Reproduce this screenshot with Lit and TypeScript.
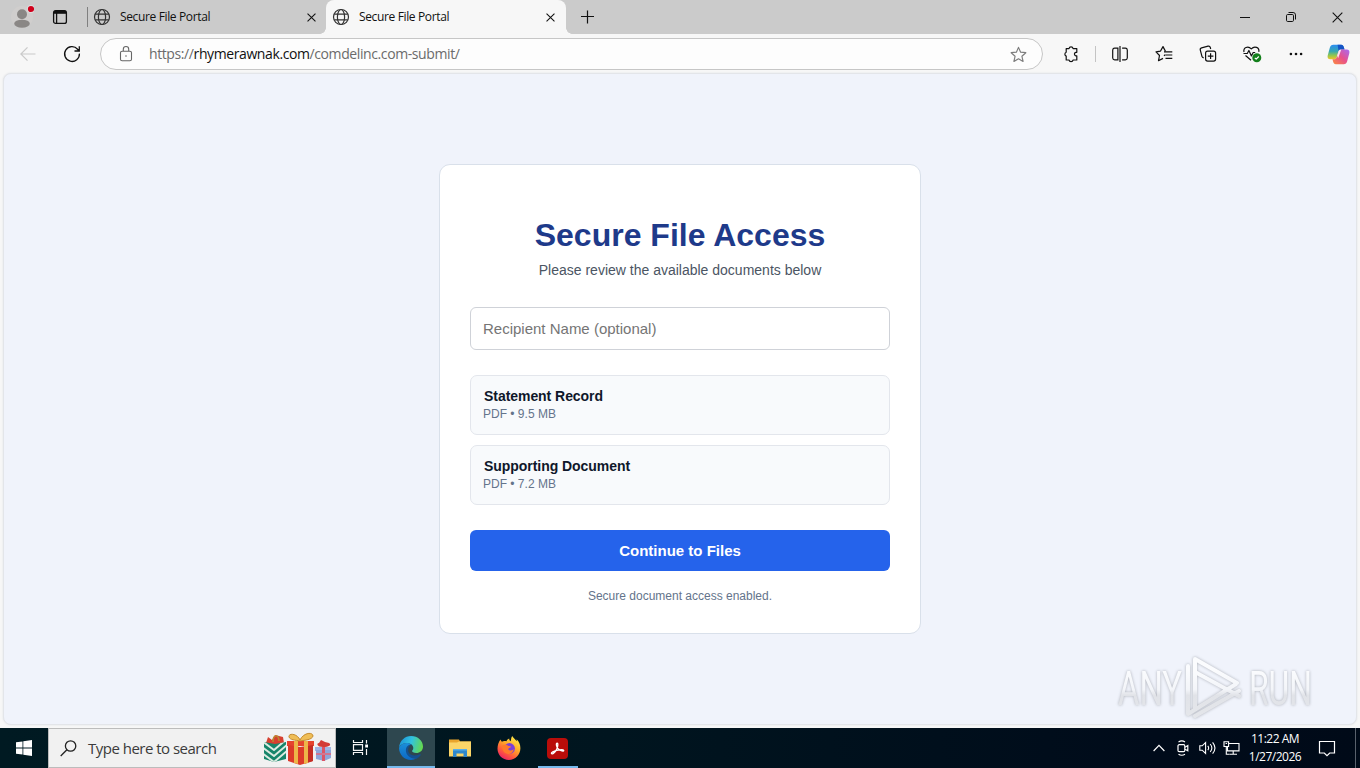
import { LitElement, html, css, svg } from "lit";
import { customElement } from "lit/decorators.js";

const globe = html`<svg class="ic" width="18" height="18" viewBox="0 0 18 18" fill="none" stroke="#333" stroke-width="1.2">
  <circle cx="9" cy="9" r="7.5"/><ellipse cx="9" cy="9" rx="3.6" ry="7.5"/><path d="M2.2 6.2h13.6M2.2 11.8h13.6"/></svg>`;

const cross = (s: number, w = 1.2) => html`<svg class="ic" width=${s} height=${s} viewBox="0 0 10 10" fill="none" stroke="#111" stroke-width=${w}>
  <path d="M.6.6l8.8 8.8M9.4.6L.6 9.4"/></svg>`;

@customElement("tab-strip")
class TabStrip extends LitElement {
  static styles = css`
    :host { display: flex; height: 34px; background: #cbcbcb; align-items: stretch; font: 12px "Open Sans", "Noto Sans", sans-serif; color: #111; }
    .ic { display: block; flex: none; }
    .slot { display: flex; align-items: center; justify-content: center; flex: none; }
    .avatar { width: 44px; }
    .work { width: 32px; }
    .sep { width: 1px; height: 20px; margin: 7px 0 0 11px; background: #808080; flex: none; }
    .tab { box-sizing: border-box; display: flex; align-items: center; padding: 0 10px 0 7px; flex: none; position: relative; }
    .first { width: 238px; padding-left: 5px; }
    .active { width: 240px; background: #f7f7f7; border-radius: 8px 8px 0 0; padding-left: 6px; padding-right: 11px; }
    .active::before, .active::after { content: ""; position: absolute; bottom: 0; width: 6px; height: 6px; }
    .active::before { left: -6px; background: radial-gradient(circle at 0 0, transparent 5.5px, #f7f7f7 6px); }
    .active::after { right: -6px; background: radial-gradient(circle at 100% 0, transparent 5.5px, #f7f7f7 6px); }
    .label { flex: 1; margin-left: 9px; padding-bottom: 2px; white-space: nowrap; letter-spacing: -0.36px; }
    .plus { width: 43px; padding-right: 1px; box-sizing: border-box; }
    .fill { flex: 1; }
    .win { width: 46px; }
  `;
  render() {
    return html`
      <div class="slot avatar"><svg class="ic" width="24" height="28" viewBox="0 0 24 28">
        <circle cx="12" cy="14" r="11" fill="#d0cecd"/><circle cx="12" cy="11.3" r="5" fill="#8a8785"/>
        <ellipse cx="12" cy="20.7" rx="7.8" ry="4" fill="#8a8785"/><circle cx="21" cy="6" r="4" fill="#dedede"/><circle cx="21" cy="6" r="3.1" fill="#d0001b"/></svg></div>
      <div class="slot work"><svg class="ic" width="16" height="16" viewBox="0 0 16 16" fill="none" stroke="#111" stroke-width="1.3">
        <rect x="1.6" y="1.6" width="12.8" height="12.8" rx="2"/><path d="M4.6 4v10.4"/><path d="M2 3.3h12" stroke-width="3"/></svg></div>
      <div class="sep"></div>
      <div class="tab first">${globe}<span class="label">Secure File Portal</span>${cross(9)}</div>
      <div class="tab active">${globe}<span class="label">Secure File Portal</span>${cross(9)}</div>
      <div class="slot plus"><svg class="ic" width="14" height="14" viewBox="0 0 14 14" stroke="#111" stroke-width="1.2"><path d="M7.5.5v13M1 6.500h13"/></svg></div>
      <div class="fill"></div>
      <div class="slot win"><svg class="ic" width="10" height="10" viewBox="0 0 10 10" stroke="#111"><path d="M0 5.5h10"/></svg></div>
      <div class="slot win"><svg class="ic" width="12" height="12" viewBox="0 0 12 12" fill="none" stroke="#111"><rect x="1.5" y="3.5" width="7" height="7" rx="1.2"/><path d="M3.5 1.5h4.6a2.4 2.4 0 0 1 2.4 2.4V8.5"/></svg></div>
      <div class="slot win">${cross(11, 1)}</div>`;
  }
}

const star = "M8 1.3l2 4.5 4.9.5-3.7 3.3 1.1 4.9L8 12l-4.3 2.5 1.1-4.9L1.1 6.3 6 5.8z";

@customElement("tool-bar")
class ToolBar extends LitElement {
  static styles = css`
    :host { display: flex; height: 39px; background: #f7f7f7; align-items: flex-start; padding-top: 4px; box-sizing: border-box; font: 14px "Open Sans", "Noto Sans", sans-serif; color: #6b6b6b; }
    .ic { display: block; flex: none; }
    .slot { display: flex; align-items: center; justify-content: center; flex: none; width: 44px; height: 32px; }
    .nav { padding-left: 6px; width: 94px; display: flex; }
    .address { box-sizing: border-box; width: 943px; height: 32px; border: 1px solid #c6c6c6; border-radius: 16px; background: #fdfdfd; display: flex; align-items: center; padding: 0 15px 0 17px; flex: none; }
    .url { flex: 1; margin-left: 15px; padding-bottom: 1px; white-space: nowrap; letter-spacing: -0.4px; }
    .host { color: #111; }
    .puzzle { width: 44px; margin-left: 6px; }
    .sep { width: 1px; height: 16px; margin: 8px 2px 0 2px; background: #c4c4c4; flex: none; }
    .split { width: 43px; }
    .split + .slot { margin-left: 1px; }
    .copilot { width: 41px; }
  `;
  render() {
    return html`
      <div class="nav">
        <div class="slot"><svg class="ic" width="16" height="16" viewBox="0 0 16 16" fill="none" stroke="#c9c9c9" stroke-width="1.2"><path d="M15.5 8H1M7.5 1.3L.8 8l6.7 6.7"/></svg></div>
        <div class="slot"><svg class="ic" width="18" height="18" viewBox="0 0 18 18" fill="none" stroke="#111" stroke-width="1.3"><path d="M16.4 8.6A7.4 7.4 0 1 1 14.6 4.2L16.3 6M16.3 1.2V6h-4.8"/></svg></div>
      </div>
      <div class="address">
        <svg class="ic" width="16" height="18" viewBox="0 0 16 18" fill="none" stroke="#666" stroke-width="1.1"><rect x="2.5" y="6.2" width="11" height="9.6" rx="1.6"/><path d="M5.3 6V4.2a2.7 2.7 0 0 1 5.4 0V6"/><circle cx="8" cy="11" r=".8" fill="#666" stroke="none"/></svg>
        <span class="url">https://<span class="host">rhymerawnak.com</span>/comdelinc.com-submit/</span>
        <svg class="ic" width="17" height="17" viewBox="0 0 16 16" fill="none" stroke="#7d7d7d" stroke-width="1.1" stroke-linejoin="round"><path d=${star}/></svg>
      </div>
      <div class="slot puzzle"><svg class="ic" width="18" height="18" viewBox="0 0 18 18" fill="none" stroke="#111" stroke-width="1.2" stroke-linejoin="round"><path d="M4.2 3.6H7a2.1 2.1 0 0 1 4.1 0h3.7v3.7h-1a1.8 1.8 0 0 0 0 3.5h1v4.200h-3.700a2.100 2.100 0 0 1-4.100 0H4.200v-3.900a2.100 2.100 0 0 1 0-3.900z"/></svg></div>
      <div class="sep"></div>
      <div class="slot split"><svg class="ic" width="18" height="18" viewBox="0 0 18 18" fill="none" stroke="#111" stroke-width="1.2"><path d="M9 1v16M6.9 3.2H3.7A2 2 0 0 0 1.7 5v8a2 2 0 0 0 2 1.8h3.2zM11.1 3.2h3.2a2 2 0 0 1 2 1.8v8a2 2 0 0 1-2 1.8h-3.2"/></svg></div>
      <div class="slot"><svg class="ic" width="18" height="18" viewBox="0 0 18 18" fill="none" stroke="#111" stroke-width="1.2" stroke-linejoin="round"><path d="M9 6.8h8.3M10.5 10h6.8M10.5 13.3h6.8M5.4 6.3L8 1.6l2.4 4.5M5.5 6.2L1 6.9l3.5 3.6-1 5.2L8 13.4M10.2 9.6L9 10.9"/></svg></div>
      <div class="slot"><svg class="ic" width="18" height="18" viewBox="0 0 18 18" fill="none" stroke="#111" stroke-width="1.2" stroke-linejoin="round"><rect x="6.6" y="6.1" width="10" height="10" rx="2"/><path d="M11.6 8.3v5.6M8.8 11.1h5.6M4.7 12.8a2.4 2.4 0 0 1-1.8-1.6L1.3 5.2a1.9 1.9 0 0 1 1.3-2.3L9 1.2a1.9 1.9 0 0 1 2.3 1.3l.4 1.5"/></svg></div>
      <div class="slot"><svg class="ic" width="20" height="18" viewBox="0 0 20 18" fill="none" stroke="#111" stroke-width="1.2" stroke-linejoin="round"><path d="M2 7C1 2.5 6 .4 9.3 3.8 12.5.4 17.7 2.4 16.8 6.8M1.5 8.5h3.8l1.6-3 2.5 5.5 1.8-3.5h2M3.5 10.5L9 15.3"/><circle cx="14.8" cy="12.8" r="4.5" fill="#14801c" stroke="none"/><path d="M12.8 12.8l1.4 1.4 2.6-2.7" stroke="#fff"/></svg></div>
      <div class="slot"><svg class="ic" width="14" height="4" viewBox="0 0 14 4" fill="#111"><circle cx="1.9" cy="2" r="1.3"/><circle cx="7" cy="2" r="1.3"/><circle cx="12.1" cy="2" r="1.3"/></svg></div>
      <div class="slot copilot"><svg class="ic" width="23" height="21" viewBox="0 0 24 22">
        <defs>
          <linearGradient id="ca" x1="0" y1="0" x2="0" y2="1"><stop offset="0" stop-color="#2b8df2"/><stop offset=".45" stop-color="#37a8b0"/><stop offset=".75" stop-color="#98c84a"/><stop offset="1" stop-color="#f4c22b"/></linearGradient>
          <linearGradient id="cb" x1="1" y1="0" x2="0" y2="1"><stop offset="0" stop-color="#a66bf5"/><stop offset=".5" stop-color="#e8518c"/><stop offset="1" stop-color="#fb8b3d"/></linearGradient></defs>
        <path d="M6.5.8h8.3c1.7 0 2.3 1 2.8 2.6l.7 2.3h-3.6c-1.7 0-2.4.9-2.9 2.6l-1.6 5.3c-.5 1.6-1.2 2.5-3 2.5H3.4c-2.3 0-3.3-1.7-2.7-4.1L2.9 4C3.5 1.9 4.6.8 6.5.8z" fill="url(#ca)"/>
        <path d="M11 .8h3.8c1.7 0 2.3 1 2.8 2.6l.7 2.3h-3.6c-1.300 0-2 .5-2.500 1.500-.8-2-.5-4.500-1.200-6.400z" fill="#1553c5"/>
        <path d="M17.5 21.2H9.2c-1.7 0-2.3-1-2.8-2.6l-.7-2.5h1.5c1.8 0 2.5-.9 3-2.5l1.6-5.3c.5-1.7 1.2-2.6 2.9-2.6h5.9c2.3 0 3.3 1.7 2.7 4.1L21.1 18c-.6 2.1-1.7 3.2-3.6 3.2z" fill="url(#cb)"/>
        <path d="M10.6 12.4l1.3-4.3c.3-1 .7-1.7 1.3-2.1h1.6l-3.2 8.9z" fill="#fff" opacity=".85"/></svg></div>`;
  }
}

@customElement("file-card")
class FileCard extends LitElement {
  static styles = css`
    :host { display: block; box-sizing: border-box; width: 482px; height: 470px; background: #fff; border: 1px solid #d9e0ea; border-radius: 11px; padding: 52px 30px 0; font-family: "Liberation Sans", Arial, sans-serif; }
    .title { margin: 0; font-size: 32px; line-height: 36px; font-weight: 700; color: #1e3a8a; text-align: center; }
    .sub { margin: 8px 0 0; font-size: 14px; line-height: 18px; color: #4b5563; text-align: center; }
    .field { box-sizing: border-box; height: 43px; margin-top: 28px; border: 1px solid #cfd2d8; border-radius: 6px; padding: 0 12px; font-size: 15px; line-height: 42px; color: #757575; }
    .files { display: grid; gap: 10px; margin-top: 25px; }
    .file { box-sizing: border-box; height: 60px; border: 1px solid #e3e6ec; border-radius: 7px; background: #f8fafc; padding: 12px 12px; }
    .name { font-size: 14px; line-height: 17px; font-weight: 700; color: #0f172a; padding-left: 1px; letter-spacing: -0.05px; }
    .meta { font-size: 12px; line-height: 16px; margin-top: 1px; color: #64748b; }
    .go { display: block; width: 100%; height: 41px; margin-top: 25px; border: 0; border-radius: 6px; background: #2563eb; color: #fff; font: 700 15px "Liberation Sans", Arial, sans-serif; }
    .note { margin: 17px 0 0; font-size: 12px; line-height: 16px; text-align: center; color: #64748b; }
  `;
  render() {
    const files = [["Statement Record", "PDF • 9.5 MB"], ["Supporting Document", "PDF • 7.2 MB"]];
    return html`
      <h1 class="title">Secure File Access</h1>
      <p class="sub">Please review the available documents below</p>
      <div class="field">Recipient Name (optional)</div>
      <div class="files">${files.map(([n, m]) => html`<div class="file"><div class="name">${n}</div><div class="meta">${m}</div></div>`)}</div>
      <button class="go">Continue to Files</button>
      <p class="note">Secure document access enabled.</p>`;
  }
}

@customElement("task-bar")
class TaskBar extends LitElement {
  static styles = css`
    :host { display: flex; height: 40px; background: linear-gradient(90deg, #001a22, #00151f 45%, #000b1a 85%, #000a18); font-family: "Open Sans", "Noto Sans", sans-serif; }
    .ic { display: block; flex: none; }
    .slot { display: flex; align-items: center; justify-content: center; flex: none; width: 49px; box-sizing: border-box; }
    .start { width: 48px; }
    .search { box-sizing: border-box; width: 288px; background: #f1f1f1; border: 1px solid #bcbcbc; display: flex; align-items: center; padding: 0 3px 0 11px; flex: none; }
    .hint { flex: 1; margin-left: 11px; font-size: 15px; letter-spacing: -0.51px; color: #3b3b3b; white-space: nowrap; }
    .view { width: 51px; padding: 0 3px 2px 0; }
    .edge { width: 48px; background: #2e474f; border-bottom: 2px solid #76b9ed; padding-top: 2px; }
    .acro { width: 40px; margin-left: 5px; border-bottom: 2px solid #76b9ed; padding: 2px 1px 0 0; }
    .fill { flex: 1; }
    .tray { width: 24px; }
    .clock { width: 64px; color: #fff; font-size: 12px; line-height: 18px; text-align: center; padding-top: 2px; letter-spacing: -0.5px; white-space: nowrap; }
    .notes { width: 40px; margin-right: 8px; }
    .show { width: 4px; border-left: 1px solid #59616c; }
  `;
  render() {
    return html`
      <div class="slot start"><svg class="ic" width="16" height="16" viewBox="0 0 16 16" fill="#fff"><path d="M0 2.3L6.500 1.400v6.200H0zM7.300 1.300L16 0v7.600H7.300zM0 8.400h6.500v6.200L0 13.700zM7.300 8.400H16V16l-8.700-1.300z"/></svg></div>
      <div class="search">
        <svg class="ic" width="17" height="17" viewBox="0 0 17 17" fill="none" stroke="#222" stroke-width="1.3"><circle cx="10.6" cy="6" r="5.2"/><path d="M6.9 9.7L.7 16"/></svg>
        <span class="hint">Type here to search</span>
        <svg class="ic" width="69" height="36" viewBox="0 0 69 36">
          <defs><clipPath id="bag"><path d="M1 12l11 2 11-2v17l-12 3-10-3z"/></clipPath></defs>
          <path d="M3 13l2-6 4 3 3-5 4 1 4 1 1 6-9 3z" fill="#d6402f"/><path d="M10 12c0-8 6-8 6-1" fill="none" stroke="#b98b31" stroke-width="1.500"/>
          <g clip-path="url(#bag)"><rect y="11" width="24" height="22" fill="#16856a"/><path d="M-1 11l12 9 14-12M-1 17l12 9 14-12M-1 23l12 9 14-12" fill="none" stroke="#dcebe1" stroke-width="2"/></g>
          <path d="M24 11h27v5H24z" fill="#e5442f"/><path d="M25 15l12 2 13-2v16l-13 4-12-4z" fill="#dc3a2a"/><path d="M41 17l9-2v16l-9 3z" fill="#c42d25"/>
          <path d="M31 11h4v23l-4-1zM41 11h4v22l-4 1z" fill="#edb548"/>
          <path d="M37 10c-3-7-12-7-11-3 1 3 6 3 11 4 5-1 12-1 13-5 0-4-9-4-13 4z" fill="#efbd55" stroke="#c58b2f"/>
          <path d="M52 17h16v4H52z" fill="#9fb6e5"/><path d="M53 20h15v8l-7 3-8-2z" fill="#8ea6da"/><path d="M59 17h3v14h-3z" fill="#dc5568"/><path d="M53 23h15v2H53z" fill="#cf7593"/><path d="M60 17c-6 0-7-4-4-4l2-3 4 2 4 1c3 2 0 4-6 4z" fill="#d33c37"/>
        </svg>
      </div>
      <div class="slot view"><svg class="ic" width="17" height="17" viewBox="0 0 17 17" fill="none" stroke="#f4f4f4" stroke-width="1.2"><path d="M1.5 1v2.500h9V1M1.500 16v-2.500h9V16M1.500 5.600h9v5.800h-9zM14.500 1v3.500M14.500 10v6"/><rect x="13.200" y="5.500" width="2.800" height="3" fill="#fff" stroke="none"/></svg></div>
      <div class="slot edge"><svg class="ic" width="24" height="24" viewBox="0 0 24 24">
        <defs><linearGradient id="e1" x1="0" y1=".3" x2="1" y2=".5"><stop offset="0" stop-color="#1b93d8"/><stop offset=".5" stop-color="#32c2df"/><stop offset="1" stop-color="#65d94e"/></linearGradient>
        <linearGradient id="e2" x1="0" y1="0" x2="0" y2="1"><stop offset="0" stop-color="#1b8fd9"/><stop offset="1" stop-color="#0c68c4"/></linearGradient></defs>
        <path d="M0 11.5C.8 4.5 5.9 0 12 0c7 0 12 5 12 10.5 0 4.2-3.2 6.5-6.6 6.5-3 0-4.3-1-4.3-1.9 0-.7 1.2-1.3 1.2-3.100 0-2.500-2.500-5-6.600-5C4.500 7 1.500 8.600 0 11.500z" fill="url(#e1)"/>
        <path d="M0 11.8C1.5 8.6 4.500 7 7.700 7c2 0 3.700.6 4.900 1.600-3.300.2-4.700 3.200-4.700 5.700 0 4.500 4.500 8.300 9.900 7.800-1.700 1.200-3.800 1.900-5.800 1.900C5.200 24 0 18.600 0 11.800z" fill="url(#e2)"/>
        <path d="M12.600 8.600c-2.300 1-3.400 3.200-3.400 5.400 0 4.500 5 7.100 11.500 4.300.8-.3 1.400.2.900.9-1 1.500-2.400 2.700-4 3.500-5.700.7-10.700-3.500-10.700-8.200 0-3.300 2.300-6 5.700-5.900z" fill="#14508f"/></svg></div>
      <div class="slot"><svg class="ic" width="22" height="20" viewBox="0 0 22 20"><path d="M0 1.500h10l1 2h11V18H0z" fill="#e9a52c"/><path d="M0 4.500h8l2-1h12V18.500H0z" fill="#fbd568"/><path d="M4 11h14v8h-3.500v-3.500h-7V19H4z" fill="#2f88cc"/><path d="M4 11h14v1.500H4z" fill="#5aaee6"/></svg></div>
      <div class="slot"><svg class="ic" width="24" height="24" viewBox="0 0 24 24">
        <defs><linearGradient id="f1" x1=".8" y1="0" x2=".2" y2="1"><stop offset="0" stop-color="#fff04a"/><stop offset=".4" stop-color="#ffab29"/><stop offset=".7" stop-color="#ff5a3c"/><stop offset="1" stop-color="#e8186d"/></linearGradient></defs>
        <path d="M3.5 3.5c.3 1 .8 1.700 1.400 2.200C6.400 4.500 8.600 5 9.500 5.200c.4-1.300 1.500-2.300 2.700-2.700-.1 1.200.5 2 1.500 2.700.5-2 .3-3.700 1.500-5.200 1.300 2.300 3.300 3.300 4.500 5.200.1-.6 0-1.300-.2-1.900 2.600 2 3.900 5.500 3.900 8.900C23.400 18.600 18.300 24 11.800 24 5.400 24 .5 19 .5 12.800c0-3.700 1.100-6.500 3-9.300z" fill="url(#f1)"/>
        <circle cx="12.500" cy="12.500" r="5.400" fill="#7a3fd8"/><path d="M5 10c2-2 4.800-1 6.500 0 1.300.2 2.500.1 2.500.8-.3 1-2.500 1.200-2.800 2.300.2 1.800 3 2 5.600.2-.7 3.500-3.300 5.200-6 4.700C7 17.300 5 14 5 10z" fill="#ff7a2c"/></svg></div>
      <div class="slot acro"><svg class="ic" width="21" height="21" viewBox="0 0 21 21"><rect width="21" height="21" rx="4" fill="#b90d0a"/><path d="M4.400 15.500c-.4-1 2.200-2.300 5.400-3.100 2.900-.7 6.600-.9 6.900.1.300 1.200-3.300.5-5.400-1.500-1.700-1.600-2.600-5.700-1.300-5.900 1.300-.2 1 3.200-.2 6-1.400 3.200-4.700 5.800-5.400 4.400z" fill="none" stroke="#fff" stroke-width="1.300"/></svg></div>
      <div class="fill"></div>
      <div class="slot tray"><svg class="ic" width="12" height="8" viewBox="0 0 12 8" fill="none" stroke="#fff" stroke-width="1.2"><path d="M.6 7L6 1.400 11.400 7"/></svg></div>
      <div class="slot tray"><svg class="ic" width="14" height="16" viewBox="0 0 14 16" fill="none" stroke="#fff" stroke-width="1.2"><rect x="2" y="4.700" width="6.800" height="7" rx="1.200"/><path d="M9 7.200l2.800-1.600v5.200L9 9.200M2.500 1.900C4.600.7 7 .7 9 1.900M2.500 14.300c2.100 1.200 4.500 1.200 6.500 0"/></svg></div>
      <div class="slot tray"><svg class="ic" width="17" height="14" viewBox="0 0 17 14" fill="none" stroke="#fff" stroke-width="1.1"><path d="M.8 4.800h2.400L6.600 1.600v10.800L3.200 9.200H.8zM8.800 4.800c1 1.300 1 3.100 0 4.400M11.200 3c2 2.400 2 5.600 0 8M13.600 1.300c2.900 3.500 2.900 7.900 0 11.400"/></svg></div>
      <div class="slot tray"><svg class="ic" width="17" height="14" viewBox="0 0 17 14" fill="none" stroke="#fff" stroke-width="1.1"><path d="M6 2.500h10v7.400H4.500V6M10.200 10v3M6.500 13.200h7.500M1 .8h4.600v4.700H1zM2.600 2.500h1.500M3.300 5.500v7.700h3"/></svg></div>
      <div class="clock"><div>11:22 AM</div><div>1/27/2026</div></div>
      <div class="slot notes"><svg class="ic" width="18" height="17" viewBox="0 0 18 17" fill="none" stroke="#fff" stroke-width="1.2"><path d="M1.500 1.500h15v11.500h-4.800L9 15.700l-2.700-2.700H1.500z"/></svg></div>
      <div class="show"></div>`;
  }
}

const word = (x: number, w: number, t: string) => svg`<text x=${x} y="51" textLength=${w} lengthAdjust="spacingAndGlyphs">${t}</text>`;

@customElement("app-root")
class AppRoot extends LitElement {
  static styles = css`
    :host { display: flex; flex-direction: column; width: 1360px; height: 768px; background: #f7f7f7; position: relative; overflow: hidden; }
    .page { box-sizing: border-box; flex: 1; margin: 0 3px 3px; border: 1px solid #e3e5e9; border-radius: 8px; background: #f0f3fb; box-shadow: 0 0 2px #dddfe3; display: flex; justify-content: center; align-items: flex-start; padding-top: 90px; }
    .mark { position: absolute; right: 34px; bottom: 40px; overflow: visible; filter: drop-shadow(0 0 1.5px rgba(90, 95, 105, .45)); }
    .mark text { font: 400 49px "Roboto", sans-serif; fill: url(#wm); }
  `;
  render() {
    return html`
      <tab-strip></tab-strip>
      <tool-bar></tool-bar>
      <div class="page"><file-card></file-card></div>
      <task-bar></task-bar>
      <svg class="mark" width="210" height="74" viewBox="0 0 210 74">
        <defs><linearGradient id="wm" x1="0" y1="0" x2="0" y2="74" gradientUnits="userSpaceOnUse"><stop offset=".2" stop-color="#fbfcfe"/><stop offset=".48" stop-color="#f3f5f9"/><stop offset=".56" stop-color="#e1e3e8"/><stop offset="1" stop-color="#e6e8ec"/></linearGradient></defs>
        ${word(2, 64, "ANY")}${word(133, 63, "RUN")}
        <g fill="none" stroke="url(#wm)" stroke-width="4" stroke-linejoin="round" stroke-linecap="round">
          <path d="M79 55V5l42 24M79 18l44 24M72 12v48l48-30M79 62l44-25"/></g>
      </svg>`;
  }
}
